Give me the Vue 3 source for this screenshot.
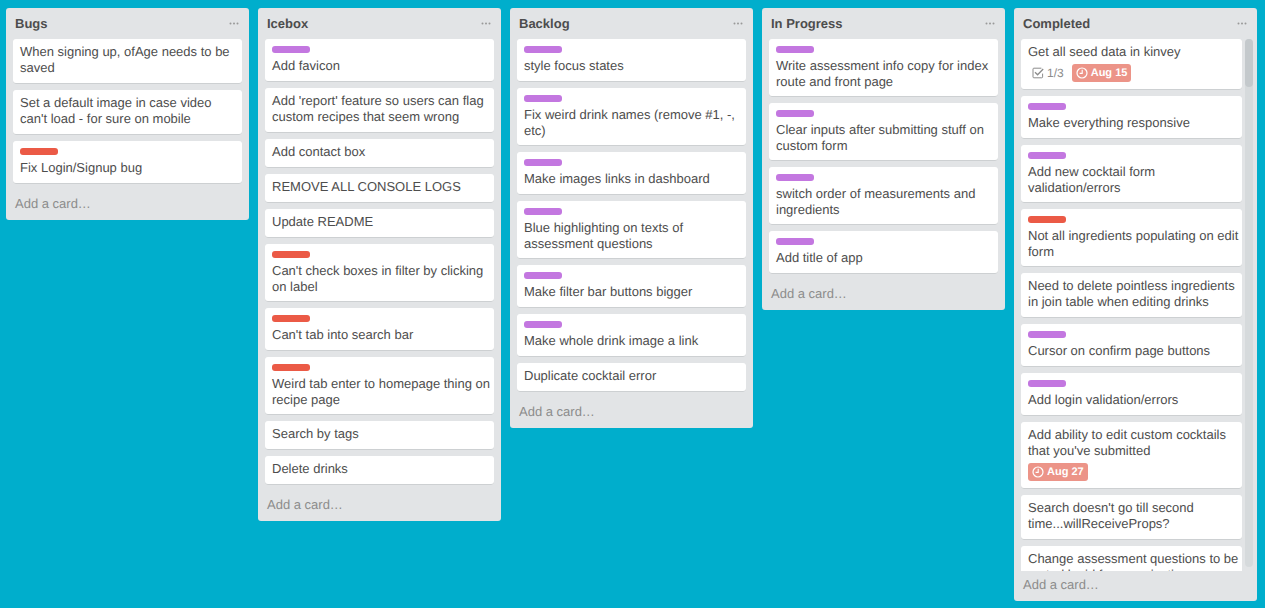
<script setup>
const lists = [
  {
    name: 'Bugs',
    cards: [
      { text: 'When signing up, ofAge needs to be saved' },
      { text: "Set a default image in case video can't load - for sure on mobile" },
      { text: 'Fix Login/Signup bug', label: 'red' },
    ],
  },
  {
    name: 'Icebox',
    cards: [
      { text: 'Add favicon', label: 'purple' },
      { text: "Add 'report' feature so users can flag custom recipes that seem wrong" },
      { text: 'Add contact box' },
      { text: 'REMOVE ALL CONSOLE LOGS' },
      { text: 'Update README' },
      { text: "Can't check boxes in filter by clicking on label", label: 'red' },
      { text: "Can't tab into search bar", label: 'red' },
      { text: 'Weird tab enter to homepage thing on recipe page', label: 'red' },
      { text: 'Search by tags' },
      { text: 'Delete drinks' },
    ],
  },
  {
    name: 'Backlog',
    cards: [
      { text: 'style focus states', label: 'purple' },
      { text: 'Fix weird drink names (remove #1, -, etc)', label: 'purple' },
      { text: 'Make images links in dashboard', label: 'purple' },
      { text: 'Blue highlighting on texts of assessment questions', label: 'purple' },
      { text: 'Make filter bar buttons bigger', label: 'purple' },
      { text: 'Make whole drink image a link', label: 'purple' },
      { text: 'Duplicate cocktail error' },
    ],
  },
  {
    name: 'In Progress',
    cards: [
      { text: 'Write assessment info copy for index route and front page', label: 'purple' },
      { text: 'Clear inputs after submitting stuff on custom form', label: 'purple' },
      { text: 'switch order of measurements and ingredients', label: 'purple' },
      { text: 'Add title of app', label: 'purple' },
    ],
  },
  {
    name: 'Completed',
    scrolls: true,
    cards: [
      { text: 'Get all seed data in kinvey', checks: '1/3', due: 'Aug 15' },
      { text: 'Make everything responsive', label: 'purple' },
      { text: 'Add new cocktail form validation/errors', label: 'purple' },
      { text: 'Not all ingredients populating on edit form', label: 'red' },
      { text: 'Need to delete pointless ingredients in join table when editing drinks' },
      { text: 'Cursor on confirm page buttons', label: 'purple' },
      { text: 'Add login validation/errors', label: 'purple' },
      { text: "Add ability to edit custom cocktails that you've submitted", due: 'Aug 27' },
      { text: "Search doesn't go till second time...willReceiveProps?" },
      { text: 'Change assessment questions to be sorted by id for organization' },
    ],
  },
]
</script>

<template>
  <main class="board">
    <section v-for="list in lists" :key="list.name" class="list">
      <header class="list-header">
        <h2>{{ list.name }}</h2>
        <button class="menu" type="button" :aria-label="`${list.name} list actions`">
          <svg width="10" height="4" viewBox="0 0 10 4" fill="currentColor">
            <circle cx="1.5" cy="1.5" r="1" />
            <circle cx="5" cy="1.5" r="1" />
            <circle cx="8.5" cy="1.5" r="1" />
          </svg>
        </button>
      </header>
      <div class="list-body" :class="{ scrolls: list.scrolls }">
        <ul class="cards">
          <li
            v-for="card in list.cards"
            :key="card.text"
            class="card"
            :class="{ labelled: card.label }"
          >
            <span v-if="card.label" class="label" :class="card.label"></span>
            <a class="title" href="#">{{ card.text }}</a>
            <div v-if="card.due" class="badges">
              <span v-if="card.checks" class="checks">
                <svg width="12" height="12" viewBox="0 0 12 12" fill="none" stroke="currentColor">
                  <path d="M9.4 1.2H1.9a.9.9 0 0 0-.9.9v7.8a.9.9 0 0 0 .9.9h7.8a.9.9 0 0 0 .9-.9V6.6" stroke-width="1" />
                  <path d="M3 5.2 5.6 7.8 11.2 2" stroke-width="1.3" />
                </svg>
                {{ card.checks }}
              </span>
              <span class="due">
                <svg width="12" height="12" viewBox="0 0 12 12" fill="none" stroke="currentColor">
                  <circle cx="6" cy="6" r="5" stroke-width="1.2" />
                  <path d="M6.2 2.8v3.6H3.6" stroke-width="1.1" />
                </svg>
                {{ card.due }}
              </span>
            </div>
          </li>
        </ul>
        <div v-if="list.scrolls" class="track"><div class="thumb"></div></div>
      </div>
      <a class="add" href="#">Add a card…</a>
    </section>
  </main>
</template>

<style>
body {
  margin: 0;
  background: #00aecc;
}
</style>

<style scoped>
.board {
  box-sizing: border-box;
  height: 100vh;
  padding: 8px 8px 7px 6px;
  display: flex;
  align-items: flex-start;
  gap: 9px;
  font: 13px/16px "Helvetica Neue", "Liberation Sans", Arial, sans-serif;
  text-rendering: geometricPrecision;
  color: #4d4d4d;
}
.list {
  flex: 1 1 0;
  min-width: 0;
  max-height: 100%;
  display: flex;
  flex-direction: column;
  background: #e2e4e6;
  border-radius: 3px;
}
.list-header {
  flex: none;
  display: flex;
  align-items: center;
  justify-content: space-between;
  height: 31px;
  padding: 0 10px 0 9px;
}
h2 {
  margin: 0;
  font-size: 13px;
  line-height: 16px;
}
.menu {
  display: flex;
  padding: 0;
  border: 0;
  background: none;
  color: #999;
}
.list-body {
  min-height: 0;
  display: flex;
  gap: 3px;
  padding: 0 7px;
}
.scrolls {
  padding-right: 4px;
}
.cards {
  flex: 1;
  min-width: 0;
  margin: 0;
  padding: 0;
  list-style: none;
  overflow-y: auto;
  scrollbar-width: none;
}
.card {
  box-sizing: border-box;
  margin-bottom: 6px;
  padding: 5px 1px 8px 7px;
  background: #fff;
  border-radius: 3px;
  box-shadow: inset 0 -1px 0 #cdd0d2;
}
.labelled {
  min-height: 43px;
  padding-top: 7px;
  padding-bottom: 7px;
}
.label {
  display: block;
  width: 38px;
  height: 7px;
  margin-bottom: 5px;
  border-radius: 3px;
}
.red {
  background: #eb5a46;
}
.purple {
  background: #c377e0;
}
.title {
  display: block;
  color: inherit;
  text-decoration: none;
}
.badges {
  display: flex;
  gap: 8px;
  margin-top: 4px;
  font-size: 12px;
  line-height: 18px;
}
.checks,
.due {
  display: flex;
  align-items: center;
  gap: 3px;
}
.checks {
  padding-left: 4px;
  color: #8c8c8c;
}
.due {
  padding: 0 4px;
  border-radius: 3px;
  background: #ec9488;
  color: #fff;
  font-size: 11px;
  font-weight: bold;
}
.track {
  flex: none;
  width: 8px;
  margin-bottom: 4px;
  border-radius: 4px;
  background: #d6dadc;
}
.thumb {
  height: 48px;
  border-radius: 4px;
  background: #c4c9cc;
}
.add {
  flex: none;
  padding: 6px 9px 8px;
  color: #8c8c8c;
  text-decoration: none;
}
</style>
